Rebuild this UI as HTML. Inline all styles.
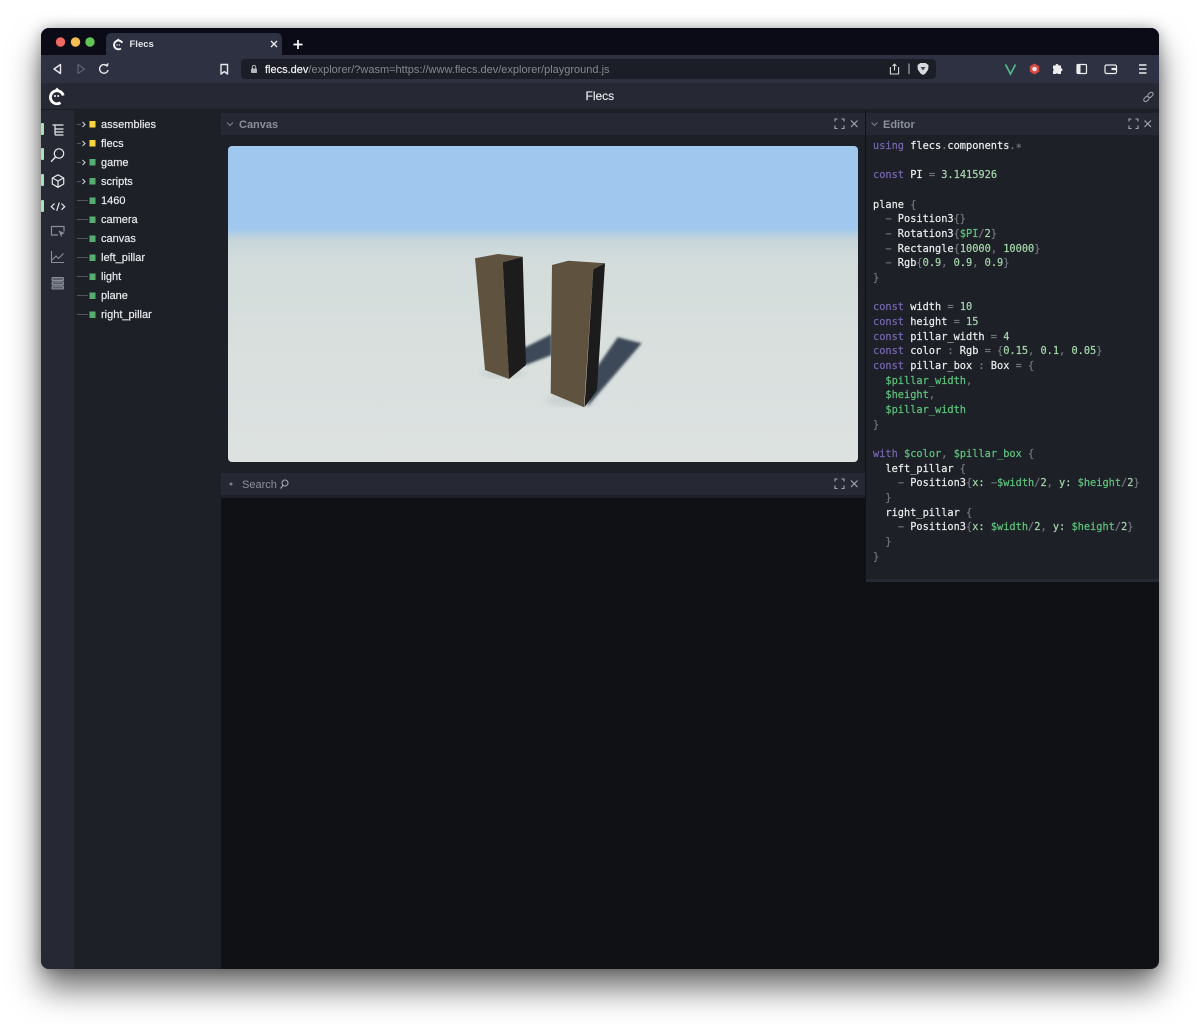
<!DOCTYPE html>
<html><head><meta charset="utf-8"><title>Flecs</title>
<style>
html,body{margin:0;padding:0;background:#fff;width:1200px;height:1024px;overflow:hidden}
#win{position:absolute;left:41px;top:28px;width:1118px;height:941px;border-radius:8px;box-shadow:0 20px 32px rgba(0,0,0,.55),0 0 14px rgba(0,0,0,.3)}
#clip{position:absolute;left:41px;top:28px;width:1118px;height:941px;border-radius:8px;overflow:hidden;background:#101114}
.b{position:absolute}
.t{position:absolute;font-family:"Liberation Sans",sans-serif;white-space:nowrap;line-height:14px;filter:blur(.3px)}
.r{font-size:11px;color:#e8e9ec;left:101px;-webkit-text-stroke:.2px #e8e9ec}
.h{font-size:11px;font-weight:bold;color:#8c909c}
pre{position:absolute;left:873px;top:139px;margin:0;font:10.3px/14.67px "DejaVu Sans Mono","Liberation Mono",monospace;color:#eceded;filter:blur(.3px);-webkit-text-stroke:.2px}
pre i{font-style:normal;color:#7767b0}
pre u{text-decoration:none;color:#74777f}
pre b{font-weight:normal;color:#a5d8aa}
pre s{text-decoration:none;color:#5ec47d}
svg{position:absolute;left:0;top:0}
</style></head><body>
<div id="win"></div>
<div id="clip"></div>
<div class="b" style="left:41px;top:28px;width:1118px;height:27px;background:#0a0b17;border-radius:8px 8px 0 0"></div>
<div class="b" style="left:106px;top:33px;width:176px;height:22px;background:#2e3141;border-radius:5px 5px 0 0"></div>
<div class="b" style="left:41px;top:55px;width:1118px;height:28px;background:#2e3141"></div>
<div class="b" style="left:241px;top:59px;width:695px;height:20px;background:#1b1d27;border-radius:4px"></div>
<div class="b" style="left:41px;top:83px;width:1118px;height:26px;background:#262933"></div>
<div class="b" style="left:41px;top:109px;width:1118px;height:1px;background:#1a1c22"></div>
<div class="b" style="left:41px;top:110px;width:33px;height:859px;background:#262933;border-radius:0 0 0 8px"></div>
<div class="b" style="left:74px;top:110px;width:147px;height:859px;background:#1d2027"></div>
<div class="b" style="left:221px;top:110px;width:644px;height:859px;background:#1d2027"></div>
<div class="b" style="left:221px;top:113px;width:644px;height:22px;background:#262933"></div>
<div class="b" style="left:228px;top:146px;width:630px;height:316px;border-radius:4px;background:linear-gradient(180deg,#a0c8ee 0,#a0c8ee 26%,#c8d6da 30%,#d3dcdc 36%,#d8dfdd 60%,#dde2e1 100%)"></div>
<div class="b" style="left:221px;top:473px;width:644px;height:22px;background:#262933"></div>
<div class="b" style="left:221px;top:495px;width:644px;height:3px;background:#1d2027"></div>
<div class="b" style="left:221px;top:498px;width:644px;height:471px;background:#101114"></div>
<div class="b" style="left:866px;top:110px;width:293px;height:472px;background:#1d2027"></div>
<div class="b" style="left:866px;top:113px;width:293px;height:22px;background:#262933"></div>
<div class="b" style="left:866px;top:579px;width:293px;height:3px;background:#262933"></div>

<svg width="1200" height="1024" viewBox="0 0 1200 1024" fill="none">
<defs><filter id="bl"><feGaussianBlur stdDeviation="1.2"/></filter><filter id="bs"><feGaussianBlur stdDeviation="4"/></filter><filter id="fine"><feGaussianBlur stdDeviation=".35"/></filter></defs>
<g filter="url(#fine)">
<!-- traffic lights -->
<circle cx="60.500" cy="42" r="4.700" fill="#ec6a5e"/><circle cx="75.500" cy="42" r="4.700" fill="#f4bf4f"/><circle cx="90" cy="42" r="4.700" fill="#61c554"/>
<!-- tab icon -->
<path d="M122.300 42.800A4.400 4.400 0 1 0 121 48.500" stroke="#f2f2f2" stroke-width="1.900"/><circle cx="117" cy="45" r=".7" fill="#f2f2f2"/><circle cx="119.300" cy="45" r=".7" fill="#f2f2f2"/><path d="M116.800 39.800l1.600-1.400 1.400 2z" fill="#f2f2f2"/>
<path d="M271 41l6 6M277 41l-6 6" stroke="#eee" stroke-width="1.300"/>
<path d="M298 40v9M293.500 44.500h9" stroke="#fff" stroke-width="1.700"/>
<!-- nav -->
<path d="M60.500 64.500v9l-6.500-4.500z" stroke="#e8e8ea" stroke-width="1.400" stroke-linejoin="round"/>
<path d="M78 64.500v9l6.500-4.500z" stroke="#5d6070" stroke-width="1.300" stroke-linejoin="round"/>
<path d="M107.500 66.500a4.300 4.300 0 1 0 .6 3.500" stroke="#e8e8ea" stroke-width="1.400"/><path d="M104.500 65.800h3.800v-3z" fill="#e8e8ea"/>
<path d="M221 64.500h6.500v9.500l-3.250-2.400-3.250 2.400z" stroke="#e8e8ea" stroke-width="1.400" stroke-linejoin="round"/>
<!-- lock -->
<rect x="251" y="68.500" width="6" height="4.500" rx=".8" fill="#b5b7bf"/><path d="M252.300 68.500v-1.400a1.700 1.700 0 0 1 3.400 0v1.400" stroke="#b5b7bf" stroke-width="1"/>
<!-- share, shield -->
<path d="M891 67.500h-.6v6.500h8.200v-6.500h-.6M894.500 70.500v-6.200M892.600 66l1.900-1.900 1.900 1.900" stroke="#d8d8dc" stroke-width="1.100"/>
<path d="M909 63.500v10.500" stroke="#c0c2c8" stroke-width="1"/>
<path d="M917.500 65l3-2h5l3 2-.3 4.500-2.700 4-2.500 1.500-2.500-1.500-2.700-4z" fill="#d9dadf"/><path d="M920.500 67h5l-2.500 3.500z" fill="#454858"/>
<!-- extensions -->
<path d="M1005.500 64.500l5 9.500 5-9.500" stroke="#4fb583" stroke-width="1.800"/>
<path d="M1034.500 63.500l4.700 2.700v5.600l-4.700 2.700-4.700-2.700v-5.600z" fill="#d64a45"/><circle cx="1034.500" cy="69" r="2.300" fill="#f1e5e5"/>
<path d="M1053 65.500h2.500a1.500 1.500 0 0 1 3 0h2.500v2.800a1.500 1.500 0 0 1 0 3v2.700h-3a1.500 1.500 0 0 0-2.500 0h-2.500v-3a1.500 1.500 0 0 0 0-2.500z" fill="#eceded"/>
<rect x="1077" y="64.500" width="9.500" height="9" rx="1" stroke="#eceded" stroke-width="1.200"/><rect x="1077" y="64.500" width="3.500" height="9" fill="#eceded"/>
<rect x="1105" y="65" width="11.500" height="8.500" rx="1.500" stroke="#eceded" stroke-width="1.200"/><path d="M1111.500 69h4.500" stroke="#eceded" stroke-width="2.200"/>
<path d="M1139 65h7.500M1139 69h7.500M1139 73h7.500" stroke="#eceded" stroke-width="1.400"/>
<!-- app logo -->
<path d="M63.200 95.500A6.500 6.500 0 1 0 60.500 102.700" stroke="#fff" stroke-width="2.800"/><path d="M54.500 90.500l2.500-3 3 3.500z" fill="#fff"/><circle cx="55" cy="96" r="1" fill="#fff"/><circle cx="58.200" cy="96" r="1" fill="#fff"/>
<!-- link -->
<g stroke="#9a9da6" stroke-width="1.100"><rect x="1143.500" y="97" width="6" height="3.800" rx="1.900" transform="rotate(-45 1146.500 99)"/><rect x="1147.500" y="93" width="6" height="3.800" rx="1.900" transform="rotate(-45 1150.500 95)"/></g>
<!-- sidebar bars -->
<g fill="#a6e3b8"><rect x="41" y="123" width="3" height="12" rx="1"/><rect x="41" y="148" width="3" height="12" rx="1"/><rect x="41" y="174" width="3" height="12" rx="1"/><rect x="41" y="200" width="3" height="12" rx="1"/></g>
<!-- sidebar icons -->
<path d="M52.500 125h11M55 129h8.500M55 132h8.500M55 135h8.500M55 125v10" stroke="#e8e9ec" stroke-width="1.200"/>
<circle cx="59" cy="153.500" r="4.700" stroke="#e8e9ec" stroke-width="1.200"/><path d="M55.500 157l-4.500 4.800" stroke="#e8e9ec" stroke-width="1.400"/>
<path d="M58 174.800l5.700 3.200v6l-5.700 3.300-5.700-3.300v-6zM52.500 178l5.500 3 5.500-3M58 181v6" stroke="#e8e9ec" stroke-width="1.200" stroke-linejoin="round"/>
<path d="M54.500 203.500l-3.200 3.200 3.200 3M61.500 203.500l3.200 3.200-3.200 3M59.300 202.500l-2.600 8.300" stroke="#e8e9ec" stroke-width="1.200"/>
<path d="M58 235h-6.500v-8.500h12.500v5" stroke="#8a8e98" stroke-width="1.200"/><path d="M58.500 230.500l6.500 2.500-2.700 1.100-1 3z" fill="#8a8e98"/>
<path d="M51.500 251v11.500h12.500M52 260l4-4 2.500 2.500 5-5" stroke="#8a8e98" stroke-width="1.100"/>
<g stroke="#8a8e98" stroke-width="1" fill="#5c606b"><rect x="52" y="277.500" width="11.500" height="3" rx=".8"/><rect x="52" y="281.800" width="11.500" height="3" rx=".8"/><rect x="52" y="286" width="11.500" height="3" rx=".8"/></g>
<!-- tree lines + squares -->
<g stroke="#50535c" stroke-width="1"><path d="M77 124.500h4M77 143.500h4M77 162.500h4M77 181.500h4M77 200.500h11M77 219.500h11M77 238.500h11M77 257.500h11M77 276.500h11M77 295.500h11M77 314.500h11"/></g>
<g stroke="#d9dade" stroke-width="1"><path d="M82.500 122l2.500 2.500-2.500 2.500M82.500 141l2.500 2.500-2.500 2.500M82.500 160l2.500 2.500-2.500 2.500M82.500 179l2.500 2.500-2.500 2.500"/></g>
<g fill="#f9d641"><rect x="89.500" y="121" width="6" height="6.500"/><rect x="89.500" y="140" width="6" height="6.500"/></g>
<g fill="#55ad70"><rect x="89.500" y="159" width="6" height="6.500"/><rect x="89.500" y="178" width="6" height="6.500"/><rect x="89.500" y="197.500" width="6" height="6.500"/><rect x="89.500" y="216.500" width="6" height="6.500"/><rect x="89.500" y="235.500" width="6" height="6.500"/><rect x="89.500" y="254.500" width="6" height="6.500"/><rect x="89.500" y="273.500" width="6" height="6.500"/><rect x="89.500" y="292.500" width="6" height="6.500"/><rect x="89.500" y="311.500" width="6" height="6.500"/></g>
<!-- panel header icons -->
<path d="M227 122.500l3 3 3-3M871.500 122.500l3 3 3-3" stroke="#7c808b" stroke-width="1"/>
<circle cx="231" cy="484" r="1.500" fill="#7c808b"/>
<g stroke="#a6a9b2" stroke-width="1.100">
<path d="M835 121.500v-2.500h2.500M841.500 119h2.500v2.500M844 125.500v3h-2.500M837.500 128.500h-2.500v-3"/>
<path d="M851 120.500l6.500 6.500M857.500 120.500l-6.500 6.500"/>
<path d="M1129 121.500v-2.500h2.500M1135.500 119h2.500v2.500M1138 125.500v3h-2.500M1131.500 128.500h-2.500v-3"/>
<path d="M1144.500 120.500l6.500 6.500M1151 120.500l-6.500 6.500"/>
<path d="M835 481.500v-2.500h2.500M841.500 479h2.500v2.500M844 485.500v3h-2.500M837.500 488.500h-2.500v-3"/>
<path d="M851 480.500l6.500 6.500M857.500 480.500l-6.500 6.500"/>
<circle cx="285" cy="483" r="3"/><path d="M283 485.500l-2.500 3"/>
</g>
<!-- scene -->
<ellipse cx="503" cy="373" rx="22" ry="5" fill="#a4adb0" opacity=".35" filter="url(#bs)"/>
<ellipse cx="570" cy="400" rx="24" ry="6" fill="#a4adb0" opacity=".35" filter="url(#bs)"/>
<path d="M500 352l26-5 25.700-13v21L526 365z" fill="#3d4a58" filter="url(#bl)"/>
<path d="M597 367l20.700-29.700 24 6L587 407z" fill="#3d4a58" filter="url(#bl)"/>
<path d="M475 258.300l23-4.300 24.700 2.700-20 5.600 6.300 116.700-24-9z" fill="#5f5340"/>
<path d="M502.700 262.300l20-5.600 3.300 108.300-17 14z" fill="#1a1d1e"/>
<path d="M552 265l16.300-4.300 36.700 2.600-11.700 6-9.300 138-33.300-14z" fill="#5f5340"/>
<path d="M593.300 269.300l11.700-6-8 126.700-12.500 17.300z" fill="#1a1d1e"/>
</g>
</svg>

<span class="t" style="left:129.500px;top:38px;font-size:9.500px;font-weight:bold;color:#e5e6ea">Flecs</span>
<span class="t" style="left:265px;top:62.500px;font-size:11px;color:#85888f"><span style="color:#f0f0f2;-webkit-text-stroke:.2px #f0f0f2">flecs.dev</span>/explorer/?wasm=https://www.flecs.dev/explorer/playground.js</span>
<span class="t" style="left:585.500px;top:89px;font-size:12px;color:#e8e9ec;-webkit-text-stroke:.15px #e8e9ec">Flecs</span>

<span class="t r" style="top:117.500px">assemblies</span>
<span class="t r" style="top:136.500px">flecs</span>
<span class="t r" style="top:155.500px">game</span>
<span class="t r" style="top:174.500px">scripts</span>
<span class="t r" style="top:193.500px">1460</span>
<span class="t r" style="top:212.500px">camera</span>
<span class="t r" style="top:231.500px">canvas</span>
<span class="t r" style="top:250.500px">left_pillar</span>
<span class="t r" style="top:269.500px">light</span>
<span class="t r" style="top:289px">plane</span>
<span class="t r" style="top:308px">right_pillar</span>

<span class="t h" style="left:239px;top:117.500px">Canvas</span>
<span class="t h" style="left:883px;top:117.500px">Editor</span>
<span class="t" style="left:242px;top:478px;font-size:11px;color:#8c909c">Search</span>

<pre><i>using</i> flecs<u>.</u>components<u>.∗</u>

<i>const</i> PI <u>=</u> <b>3.1415926</b>

plane <u>{</u>
  <u>−</u> Position3<u>{}</u>
  <u>−</u> Rotation3<u>{</u><s>$PI</s><u>/</u><b>2</b><u>}</u>
  <u>−</u> Rectangle<u>{</u><b>10000</b><u>,</u> <b>10000</b><u>}</u>
  <u>−</u> Rgb<u>{</u><b>0.9</b><u>,</u> <b>0.9</b><u>,</u> <b>0.9</b><u>}</u>
<u>}</u>

<i>const</i> width <u>=</u> <b>10</b>
<i>const</i> height <u>=</u> <b>15</b>
<i>const</i> pillar_width <u>=</u> <b>4</b>
<i>const</i> color <u>:</u> Rgb <u>= {</u><b>0.15</b><u>,</u> <b>0.1</b><u>,</u> <b>0.05</b><u>}</u>
<i>const</i> pillar_box <u>:</u> Box <u>= {</u>
  <s>$pillar_width</s><u>,</u>
  <s>$height</s><u>,</u>
  <s>$pillar_width</s>
<u>}</u>

<i>with</i> <s>$color</s><u>,</u> <s>$pillar_box</s> <u>{</u>
  left_pillar <u>{</u>
    <u>−</u> Position3<u>{</u><b>x:</b> <u>−</u><s>$width</s><u>/</u><b>2</b><u>,</u> <b>y:</b> <s>$height</s><u>/</u><b>2</b><u>}</u>
  <u>}</u>
  right_pillar <u>{</u>
    <u>−</u> Position3<u>{</u><b>x:</b> <s>$width</s><u>/</u><b>2</b><u>,</u> <b>y:</b> <s>$height</s><u>/</u><b>2</b><u>}</u>
  <u>}</u>
<u>}</u></pre>
</body></html>
